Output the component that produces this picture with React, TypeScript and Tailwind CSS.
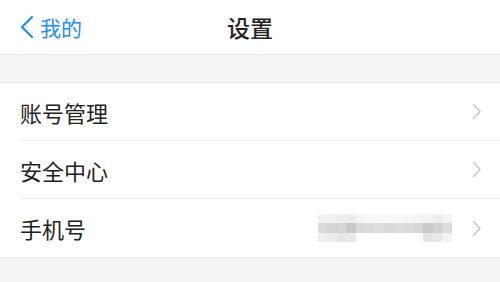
import React from "react";

const rows = ["账号管理", "安全中心", "手机号"];

const blur: string[][] = [
  ["#f2f2f2", "#f0f0f0", "#eeeeee", "#ededed", "#f5f5f5", "#f7f7f7", "#f8f8f8", "#f8f8f8", "#f7f7f7", "#f6f6f6", "#f5f5f5", "#f3f3f3", "#eeeeee", "#f3f3f3"],
  ["#d9d9d9", "#d4d4d4", "#d6d6d6", "#c9c9c9", "#d9d9d9", "#dcdcdc", "#dedede", "#d9d9d9", "#dcdcdc", "#dadada", "#d6d6d6", "#cbcbcb", "#d2d2d2", "#dcdcdc"],
  ["#eeeeee", "#ececec", "#e4e4e4", "#eaeaea", "#ffffff", "#ffffff", "#ffffff", "#ffffff", "#ffffff", "#ffffff", "#fcfcfc", "#e4e4e4", "#e8e8e8", "#f3f3f3"],
];

function Chevron() {
  return (
    <svg width="10" height="17" viewBox="0 0 10 17" fill="none">
      <path d="M1.5 1.5L8 8.5L1.5 15.5" stroke="#c7c7cc" strokeWidth="1.6" strokeLinecap="round" strokeLinejoin="round" />
    </svg>
  );
}

export default function App() {
  return (
    <div
      className="w-[500px] h-[282px] bg-[#f4f4f7] overflow-hidden"
      style={{ fontFamily: '"Noto Sans CJK SC", "Noto Sans", sans-serif' }}
    >
      <div className="relative h-[55px] bg-white border-b border-[#e6e6ea] flex items-center justify-center">
        <div className="absolute left-[20px] top-0 h-full flex items-center gap-[6px] text-[#1f8ef1]">
          <svg width="14" height="24" viewBox="0 0 14 24" fill="none">
            <path d="M12 2L2 12L12 22" stroke="#1f8ef1" strokeWidth="2.2" strokeLinecap="round" strokeLinejoin="round" />
          </svg>
          <span className="text-[21px] leading-none">我的</span>
        </div>
        <span className="text-[23px] leading-none font-medium text-[#222222]">设置</span>
      </div>
      <div className="h-[27px]" />
      <div className="bg-white border-t border-b border-[#e6e6ea]">
        {rows.map((r, i) => (
          <div key={r} className="pl-[20px]">
            <div
              className={
                "h-[58px] flex items-center pr-[18px] " +
                (i < rows.length - 1 ? "border-b border-[#ebebee]" : "")
              }
            >
              <span className="text-[22px] leading-none text-[#222222] flex-1">{r}</span>
              {i === 2 && (
                <div className="flex flex-col mr-[20px]">
                  {blur.map((line, li) => (
                    <div key={li} className="flex">
                      {line.map((c, ci) => (
                        <div key={ci} className="w-[9.6px] h-[9.5px]" style={{ backgroundColor: c }} />
                      ))}
                    </div>
                  ))}
                </div>
              )}
              <Chevron />
            </div>
          </div>
        ))}
      </div>
    </div>
  );
}
